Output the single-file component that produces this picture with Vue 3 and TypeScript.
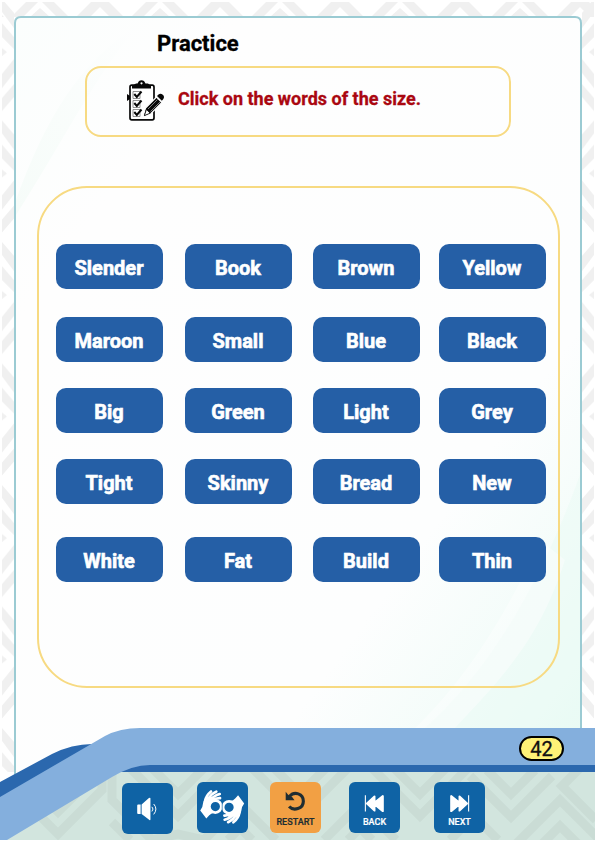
<script setup lang="ts">
const rows: string[][] = [
  ['Slender', 'Book', 'Brown', 'Yellow'],
  ['Maroon', 'Small', 'Blue', 'Black'],
  ['Big', 'Green', 'Light', 'Grey'],
  ['Tight', 'Skinny', 'Bread', 'New'],
  ['White', 'Fat', 'Build', 'Thin'],
]
const words: string[] = rows.flat()
const pageNumber = 42
</script>

<template>
  <main class="page">
    <svg class="backdrop" viewBox="0 0 596 842" aria-hidden="true">
      <defs>
        <pattern id="side" x="2" y="-9" width="12" height="121.5" patternUnits="userSpaceOnUse">
          <path d="M0 8 12 22V37L0 21ZM0 32 12 46V58L0 46ZM0 57 5 61 0 65ZM12 68V82L0 97V83ZM12 93V106L0 120V107Z" fill="#f0f0f0" />
        </pattern>
        <pattern id="sideRight" x="582" y="-9" width="12" height="121.5" patternUnits="userSpaceOnUse">
          <path d="M12 8 0 22V37L12 21ZM12 32 0 46V58L12 46ZM12 57 7 61 12 65ZM0 68V82L12 97V83ZM0 93V106L12 120V107Z" fill="#f0f0f0" />
        </pattern>
        <pattern id="top" x="-20" y="2" width="120" height="15" patternUnits="userSpaceOnUse">
          <path d="M0 0H9L24 15H10L0 5ZM31 15 46 0H58L43 15ZM50 15 60 6 70 15ZM62 0H74L89 15H77ZM96 15 111 0H120V5L110 15Z" fill="#f0f0f0" />
        </pattern>
        <linearGradient id="sheet" x1="0" y1="0" x2="1" y2="1">
          <stop offset="0" stop-color="#fbfefd" />
          <stop offset=".2" stop-color="#fefefe" />
          <stop offset=".7" stop-color="#fdfefe" />
          <stop offset="1" stop-color="#e8faf4" />
        </linearGradient>
        <linearGradient id="sweep" x1="0" y1="1" x2="1" y2="0">
          <stop offset="0" stop-color="#f6fcf9" />
          <stop offset="1" stop-color="#fdfefe" />
        </linearGradient>
        <clipPath id="floorArea">
          <path d="M0 840 115 771H595V840Z" />
        </clipPath>
      </defs>
      <rect width="596" height="842" fill="#fff" />
      <rect x="2" y="2" width="12" height="770" fill="url(#side)" />
      <rect x="582" y="2" width="12" height="770" fill="url(#sideRight)" />
      <rect x="2" y="2" width="592" height="15" fill="url(#top)" />
      <path d="M15 790V23Q15 17 21 17H575Q581 17 581 23V790Z" fill="url(#sheet)" stroke="#9bcbd3" stroke-width="2" />
      <path d="M16 200C45 120 80 60 140 24C95 75 70 130 16 215Z" fill="url(#sweep)" />
      <path d="M580 475C540 585 490 670 425 728H580Z" fill="#e9fbf4" opacity=".45" />
      <path d="M540 540C500 630 455 690 415 728H455C500 680 540 640 565 560Z" fill="#fff" opacity=".4" />
      <path d="M0 840 115 771H595V840Z" fill="#d2e5de" />
      <g clip-path="url(#floorArea)" fill="none" stroke="#cadcd5" stroke-width="9">
        <path d="M-10 766 58 834 102 790V766M12 766 58 812 92 778M112 766V800L152 840M128 766 178 816 228 766M112 822 130 840M150 766 178 794 206 766M152 840 178 834 204 840" />
        <path d="M204 840 240 804 276 840M228 840 240 828 252 840M250 766 300 816 350 766M272 766 300 794 328 766M324 840 360 804 396 840M348 840 360 828 372 840M370 766 420 816 470 766M392 766 420 794 448 766" />
        <path d="M487 770 511 794 535 770M470 776 511 817 552 776M450 840 474 816 498 840M510 850 560 800 610 850M536 850 560 826 584 850M596 820 562 786 582 766" />
      </g>
      <path d="M0 782 52 754Q72 744 92 744H160V765H595V772H118L0 835Z" fill="#2b68ae" />
      <path d="M0 797 105 736Q120 728 140 728H595V765H150Q132 765 112 777L7 840H0Z" fill="#84afdd" />
    </svg>

    <h1 class="title">Practice</h1>

    <section class="instruction">
      <svg class="clipboard" viewBox="0 0 38 42" aria-hidden="true">
        <rect x="4" y="5.2" width="24" height="34.6" rx="1.8" fill="#fff" stroke="#080808" stroke-width="1.7" />
        <path d="M6 8.5V6L10 3.5H11.5L13 1Q15.5-.3 18 1L19.5 3.5H22L25 6V8.5Z" fill="#080808" />
        <circle cx="15.5" cy="3.3" r="1.1" fill="#fff" />
        <path d="M1 14 4 16V19L1 21Z" fill="#080808" />
        <path d="M7 11.5H14V18.5H7ZM7 20.5H14V27.5H7ZM7 29.5H14V36.5H7Z" fill="none" stroke="#777" stroke-width=".8" />
        <path d="M8.3 14 10.8 17 15.5 11.5M8.3 23 10.8 26 15.5 20.5M8.3 32 10.8 35 15.5 29.5" fill="none" stroke="#080808" stroke-width="2" />
        <path d="M17 37 19.5 28 30.5 17 36 22.5 25 33.5Z" fill="#080808" stroke="#fff" stroke-width="1.2" />
        <path d="M18.4 35.6 20.4 29.5 24.2 33.2Z" fill="#fff" stroke="#080808" stroke-width=".8" />
        <path d="M22 29 31.5 19.5M24.5 31.5 34 22" stroke="#ccc" stroke-width=".6" />
        <path d="M31 16 32.5 14.5Q34.5 12.8 36.8 14.8T37 19.5L35.8 20.8Z" fill="#080808" />
      </svg>
      <p class="prompt">Click on the words of the size.</p>
    </section>

    <section class="board">
      <button v-for="word in words" :key="word" class="word" type="button">{{ word }}</button>
    </section>

    <div class="ribbon"><span class="number">{{ pageNumber }}</span></div>

    <nav class="controls">
      <button class="control sound" type="button" aria-label="Sound">
        <svg viewBox="0 0 52 52" aria-hidden="true">
          <path d="M16.5 22H19V31.5H16.5Q15.5 31.5 15.5 30.5V23Q15.5 22 16.5 22ZM20 21.8 26 16.5Q29 14 29 15.8V37Q29 38.8 27 37L20 31.5Z" fill="#fff" />
          <path d="M30.5 24.3Q32.7 26.5 30.5 29M32.3 21.4Q36.8 26.5 32.3 32" fill="none" stroke="#fff" stroke-width="1" />
        </svg>
      </button>
      <button class="control sign" type="button" aria-label="Sign language">
        <svg viewBox="0 0 52 52" aria-hidden="true">
          <defs>
            <g id="hand">
              <path d="M3.3 29Q6 26 6.3 21L9 15 19 16.5 13.5 21 14 29.5 18 31Q14 32 12.5 34L9.5 37.3Z" fill="#fff" />
              <path d="M8 20Q9 14 14.3 9.7M11 18Q14 12.5 19.7 9.8M13 19Q17 14 23.2 12.3M16 19Q19 16.3 23.5 16.5" fill="none" stroke="#fff" stroke-width="2.7" stroke-linecap="round" />
              <circle cx="18.7" cy="25" r="6.1" fill="#0f63a5" stroke="#fff" stroke-width="2.8" />
            </g>
          </defs>
          <use href="#hand" />
          <use href="#hand" transform="rotate(180 25.7 25.4)" />
          <path d="M25.7 21V30" stroke="#0f63a5" stroke-width=".7" />
        </svg>
      </button>
      <button class="control restart" type="button">
        <svg viewBox="0 0 52 52" aria-hidden="true">
          <path d="M20 14.5C25 9 34 12 34 19.5C34 27.5 24 30 19.5 25" fill="none" stroke="#202d32" stroke-width="3.2" />
          <path d="M16 10V18.5H25L22.8 15.5 18.5 13Z" fill="#202d32" />
        </svg>
        <span>RESTART</span>
      </button>
      <button class="control back" type="button">
        <svg viewBox="0 0 52 52" aria-hidden="true">
          <path d="M16.7 13.5V30" stroke="#fff" stroke-width="1.1" />
          <path d="M18.3 22 26 14.8V29.2ZM25 22 34.5 14.3V29.7Z" fill="#fff" stroke="#fff" stroke-width="2" stroke-linejoin="round" />
        </svg>
        <span>BACK</span>
      </button>
      <button class="control next" type="button">
        <svg viewBox="0 0 52 52" aria-hidden="true">
          <path d="M35.3 13.5V30" stroke="#fff" stroke-width="1.1" />
          <path d="M33.7 22 26 14.8V29.2ZM27 22 17.5 14.3V29.7Z" fill="#fff" stroke="#fff" stroke-width="2" stroke-linejoin="round" />
        </svg>
        <span>NEXT</span>
      </button>
    </nav>
  </main>
</template>

<style>
body {
  margin: 0;
  background: #fff;
}
</style>

<style scoped>
.page {
  position: relative;
  isolation: isolate;
  box-sizing: border-box;
  width: 596px;
  height: 842px;
  overflow: hidden;
  padding-top: 31px;
  font-family: Roboto, sans-serif;
}

.backdrop {
  position: absolute;
  inset: 0;
  z-index: -1;
  width: 596px;
  height: 842px;
}

.title {
  height: 26px;
  margin: 0 0 9px 157px;
  color: #000;
  font-size: 22px;
  font-weight: 700;
  line-height: 26px;
  -webkit-text-stroke: 0.3px currentColor;
}

.instruction {
  display: flex;
  box-sizing: border-box;
  width: 426px;
  height: 71px;
  margin-left: 85px;
  padding: 12px 0 0 39px;
  border: 2px solid #f7da82;
  border-radius: 16px;
}

.clipboard {
  width: 38px;
  height: 42px;
}

.prompt {
  margin: 7px 0 0 14px;
  color: #aa0710;
  font-size: 18px;
  font-weight: 700;
  line-height: 24px;
  white-space: nowrap;
  -webkit-text-stroke: 0.3px currentColor;
}

.board {
  display: grid;
  grid-template-columns: 129px 128px 126px 107px;
  grid-template-rows: 73px 71px 71px 78px 45px;
  box-sizing: border-box;
  width: 523px;
  height: 502px;
  margin: 49px 0 0 37px;
  padding: 56px 0 0 17px;
  border: 2px solid #f7da82;
  border-radius: 50px;
}

.word {
  width: 107px;
  height: 45px;
  padding: 3px 1px 0 0;
  border: 0;
  border-radius: 10px;
  background: #255fa6;
  color: #fff;
  font: 700 20px/42px Roboto, sans-serif;
  -webkit-text-stroke: 0.6px currentColor;
}

.ribbon {
  display: flex;
  justify-content: flex-end;
  height: 46px;
  margin-top: 48px;
  padding-right: 32px;
}

.number {
  box-sizing: border-box;
  width: 45px;
  height: 25px;
  border: 2px solid #000;
  border-radius: 13px;
  background: #fff277;
  color: #111;
  font-size: 20px;
  line-height: 23px;
  text-align: center;
  -webkit-text-stroke: 0.3px currentColor;
}

.controls {
  display: flex;
  padding-left: 122px;
}

.control {
  display: grid;
  width: 51px;
  height: 51px;
  padding: 0;
  border: 0;
  border-radius: 6px;
  background: #0f63a5;
  color: #fff;
  font: 500 9px/11px Roboto, sans-serif;
  -webkit-text-stroke: 0.2px currentColor;
}

.control svg,
.control span {
  grid-area: 1 / 1;
}

.control svg {
  width: 51px;
  height: 51px;
}

.control span {
  align-self: end;
  padding-bottom: 5px;
  text-align: center;
}

.sound {
  margin-top: 1px;
}

.sign {
  margin-left: 24px;
}

.restart {
  margin-left: 22px;
  background: #f2a044;
  color: #202d32;
}

.back {
  margin-left: 28px;
}

.next {
  margin-left: 34px;
}
</style>
